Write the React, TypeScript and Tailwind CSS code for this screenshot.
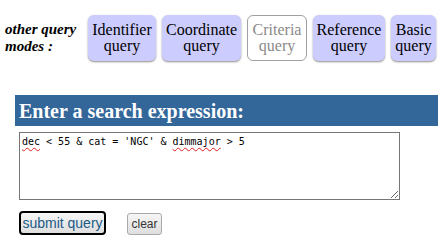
const modes = [
  { label: "Identifier", w: "w-[68px]", active: false },
  { label: "Coordinate", w: "w-[79px]", active: false },
  { label: "Criteria", w: "w-[60px]", active: true },
  { label: "Reference", w: "w-[72px]", active: false },
  { label: "Basic", w: "w-[45px]", active: false },
];

function ModeButton({ label, w, active }: { label: string; w: string; active: boolean }) {
  if (active) {
    return (
      <div className={`${w} h-[46px] shrink-0 flex flex-col items-center justify-center rounded-[6px] border border-[#a0a0a0] bg-white text-[#8a8a8a] text-[16px] leading-[16px] font-['Liberation_Serif',serif]`}>
        <span>{label}</span>
        <span>query</span>
      </div>
    );
  }
  return (
    <div className={`${w} h-[46px] shrink-0 flex flex-col items-center justify-center rounded-[6px] bg-[#ccccff] shadow-[0_1px_2px_rgba(0,0,0,0.45)] text-black text-[16px] leading-[16px] font-['Liberation_Serif',serif]`}>
      <span>{label}</span>
      <span>query</span>
    </div>
  );
}

export default function App() {
  return (
    <div className="w-[438px] h-[242px] overflow-hidden bg-white">
      <div className="flex items-center pt-[15px] pl-[5px]">
        <div className="w-[83px] shrink-0 font-bold italic text-[15px] leading-[17px] font-['Liberation_Serif',serif] text-black">
          other query
          <br />
          modes :
        </div>
        <div className="flex gap-[6px]">
          {modes.map((m) => (
            <ModeButton key={m.label} {...m} />
          ))}
        </div>
      </div>

      <h2 className="mt-[34px] ml-[15px] h-[31px] bg-[#336699] pl-[4px] flex items-center text-white font-bold text-[20px] font-['Liberation_Serif',serif]">
        Enter a search expression:
      </h2>

      <div className="pl-[19px] pt-[6px]">
        <div className="relative w-[381px]">
          <textarea
            defaultValue="dec < 55 & cat = 'NGC' & dimmajor > 5"
            className="block w-[381px] h-[68px] border border-[#767676] px-[2px] py-[2px] text-[10px] leading-[13px] text-black font-['DejaVu_Sans_Mono',monospace] outline-none"
          />
          {/* spell-check squiggles */}
          <div className="pointer-events-none absolute left-[1px] top-[1px] px-[2px] py-[2px] text-[10px] leading-[13px] text-transparent whitespace-pre font-['DejaVu_Sans_Mono',monospace]">
            <span className="underline decoration-wavy decoration-[#e02020] underline-offset-[2px]">dec</span>
            {" < 55 & cat = 'NGC' & "}
            <span className="underline decoration-wavy decoration-[#e02020] underline-offset-[2px]">dimmajor</span>
            {" > 5"}
          </div>
        </div>
        <div className="flex items-end gap-[21px] mt-[11px]">
          <button className="w-[87px] h-[24px] rounded-[4px] border-2 border-black bg-gradient-to-b from-[#f6f6f6] to-[#dedede] text-[14px] text-[#1b5a86] font-['Liberation_Sans',sans-serif]">
            submit query
          </button>
          <button className="w-[35px] h-[22px] rounded-[3px] border border-[#a9a9a9] bg-gradient-to-b from-[#f6f6f6] to-[#dedede] text-[12px] text-[#333] font-['Liberation_Sans',sans-serif]">
            clear
          </button>
        </div>
      </div>
    </div>
  );
}
